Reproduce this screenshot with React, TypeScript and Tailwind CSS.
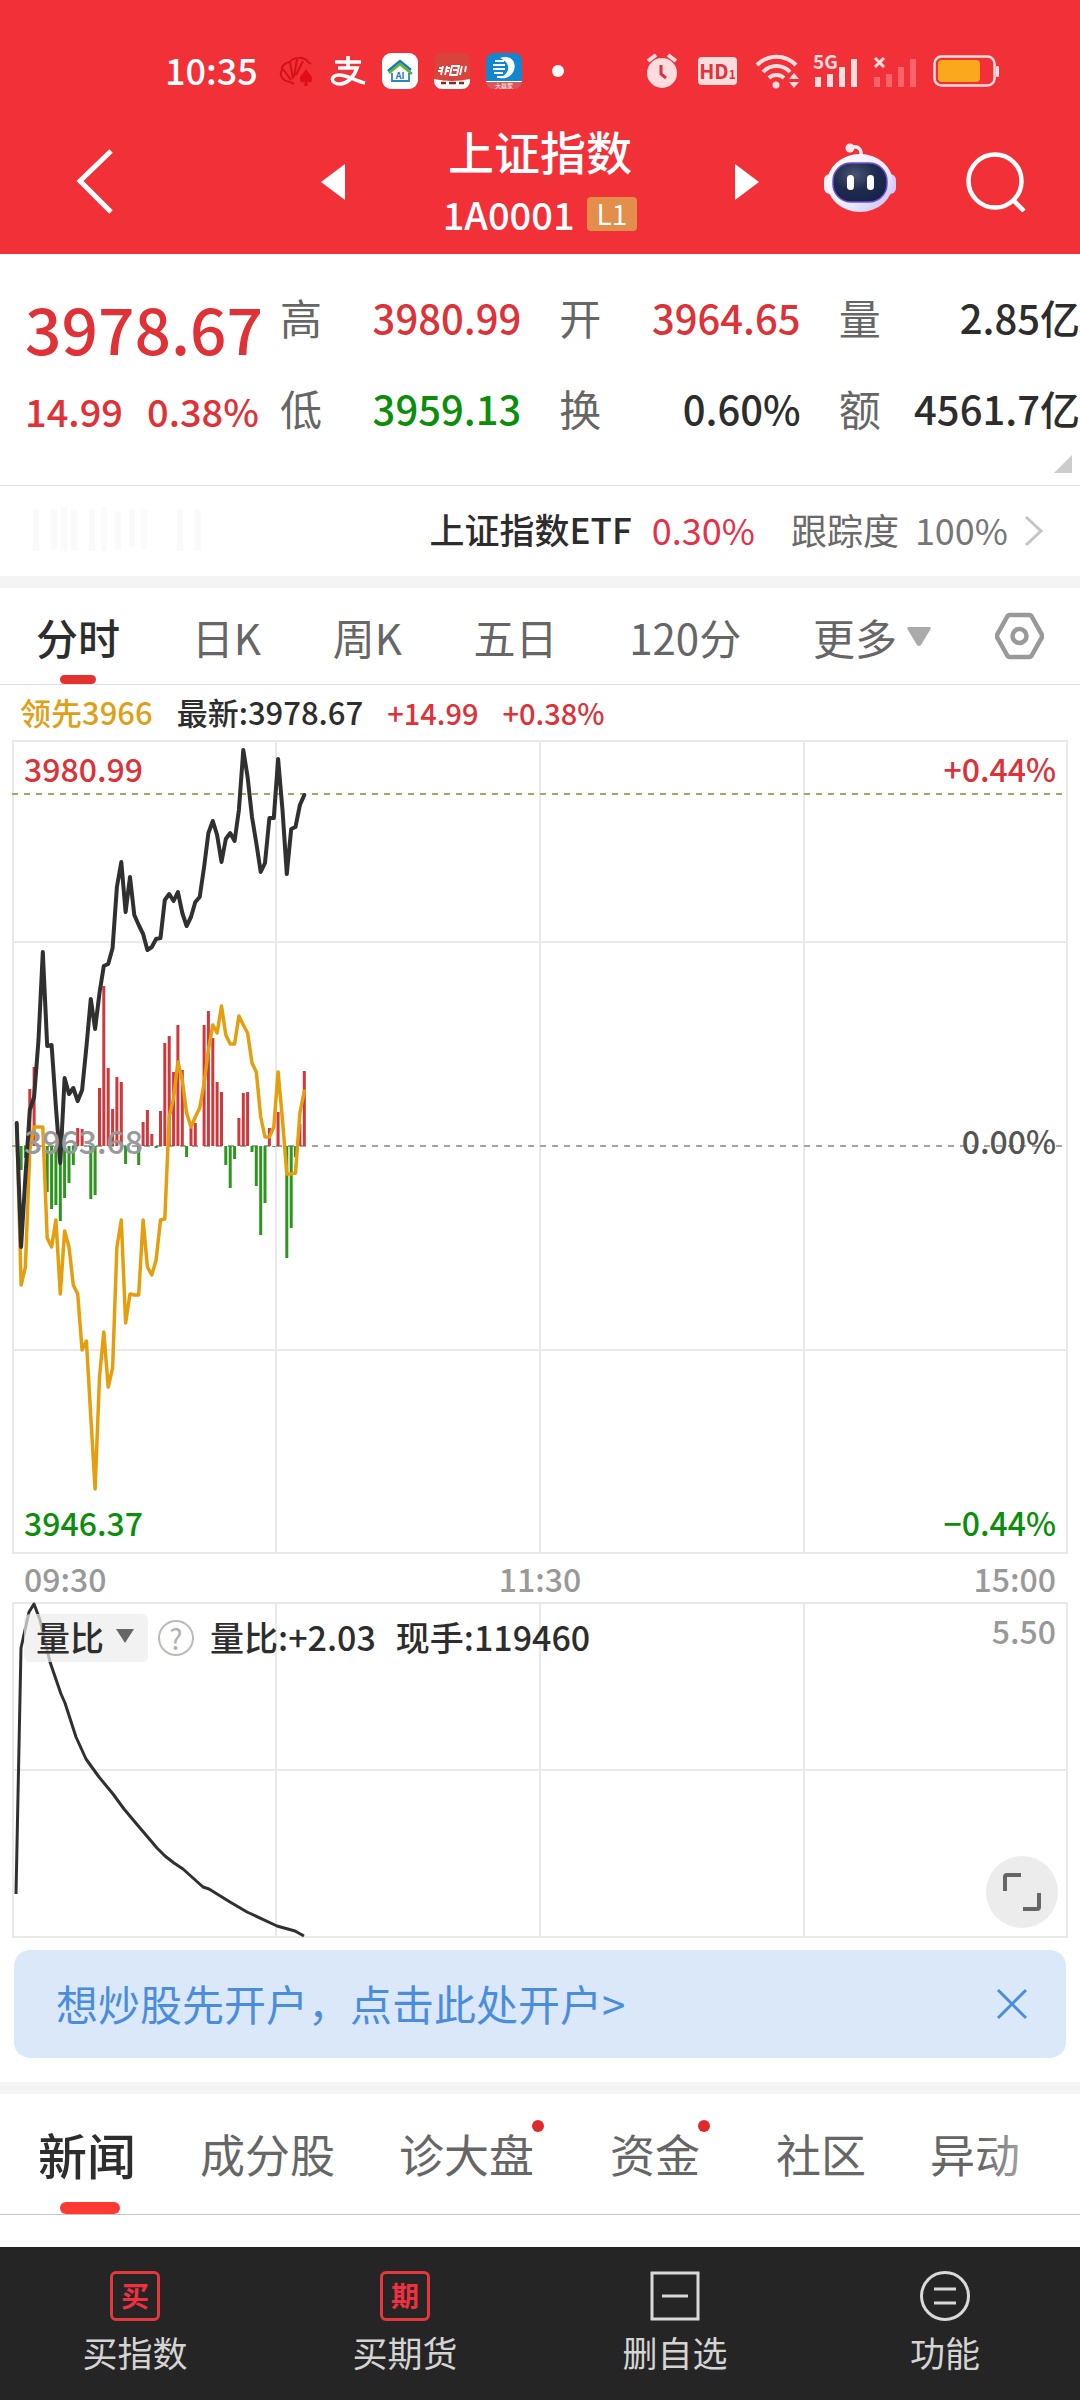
import React from "react";

const GRID = "#e9e9e9";

/* Minute series: values are y positions in the chart's own coordinate space */
const PRICE = [
  1123, 1247, 1177, 1110, 1097, 1040, 952, 1046, 1045, 1107, 1163, 1078, 1094, 1088, 1101, 1090, 1047,
  999, 1029, 993, 966, 964, 948, 887, 862, 912, 877, 915, 925, 934, 950, 947, 939, 938, 900, 894, 901,
  892, 913, 926, 917, 902, 897, 867, 833, 821, 835, 862, 839, 833, 841, 810, 750, 777, 817, 843, 872,
  863, 818, 818, 759, 810, 874, 829, 827, 805, 795,
];
const LEAD = [
  1123, 1285, 1267, 1150, 1127, 1127, 1127, 1238, 1247, 1220, 1294, 1231, 1247, 1285, 1294, 1350, 1341,
  1417, 1489, 1377, 1332, 1387, 1368, 1247, 1220, 1323, 1294, 1295, 1295, 1220, 1267, 1275, 1260, 1220,
  1219, 1117, 1098, 1062, 1080, 1113, 1127, 1117, 1108, 1083, 1050, 1025, 1033, 1006, 1035, 1044, 1044,
  1016, 1025, 1033, 1063, 1072, 1117, 1137, 1137, 1127, 1072, 1120, 1174, 1174, 1173, 1113, 1091,
];
/* Momentum bars: positive grows up (red), negative grows down (green) */
const BARS = [
  0, -24, -12, 57, 79, 0, 0, -46, -63, -59, -75, -52, -37, -19, 18, 17, 0, -53, -49, 58, 160, 78, 37, 69,
  64, -18, 0, 0, -19, 24, 36, 12, -2, 35, 103, 110, 74, 121, 76, -11, 18, 23, 0, 121, 135, 108, 64, 54,
  -19, -42, -13, 28, 53, 54, -6, -40, -89, -57, 18, -1, 34, 0, -112, -82, -11, 22, 75,
];
const RATIO =
  "16,1894 21,1648 29,1612 34,1604 40,1620 50,1662 61,1694 65,1703 76,1737 86,1759 99,1777 113,1794 124,1809 140,1828 157,1848 165,1856 174,1863 183,1869 203,1887 209,1889 230,1902 247,1912 277,1926 295,1931 304,1936";

const xAt = (i: number) => Math.round((16.7 + i * 4.357) * 10) / 10;
const toPoints = (s: number[]) => s.map((y, i) => `${xAt(i)},${y}`).join(" ");

function StatusBar() {
  return (
    <div className="flex h-[110px] items-center justify-between pl-[165px] pr-20 pt-8">
      <div className="flex items-center gap-4">
        <time className="mr-1 pb-1 text-[36px] font-medium leading-none">10:35</time>
        <svg className="h-8 w-9" viewBox="0 0 36 32" fill="none" stroke="#d70f18" strokeWidth="2">
          <path d="M12 27C4 26 1 20 4 15c-1-4 4-8 8-8 3-5 14-6 18 0l3 2M13 25 5 14M15 24l-3-17M16 22l3-18M18 20l7-14M12 27l4 2" />
          <path d="M28 14c-2 4-7 7-6 11 1 3 4 3 5 1l-1 5h4l-1-5c1 2 5 2 5-1 1-4-4-7-6-11Z" fill="#e00d14" stroke="none" />
        </svg>
        <svg className="h-8 w-9" viewBox="0 0 36 32" fill="none" stroke="#fff" strokeWidth="3.6">
          <path d="M5 7h26M18 1v12M8 13h19c-3 9-10 16-17 16-10 0-10-9-1-9 9 0 16 6 26 8" />
        </svg>
        <svg className="h-9 w-9" viewBox="0 0 36 36">
          <rect width="36" height="36" rx="9" fill="#fff" />
          <path d="m6 18 12-10 11 9" fill="none" stroke="#1e73b8" strokeWidth="2.5" />
          <path d="m7 20 11-9 12 10" fill="none" stroke="#5cb531" strokeWidth="2.5" />
          <path d="M10 20v8h17v-8" fill="none" stroke="#2b86c0" strokeWidth="1.8" />
          <text x="18" y="26" fontSize="9" fontWeight="700" textAnchor="middle" fill="#1e73b8">AI</text>
        </svg>
        <svg className="h-9 w-9" viewBox="0 0 36 36">
          <defs>
            <clipPath id="round"><rect width="36" height="36" rx="8" /></clipPath>
          </defs>
          <g clipPath="url(#round)">
            <rect width="36" height="36" fill="#d8443c" />
            <path d="M0 26q18 4 36 0v10H0Z" fill="#fff" />
            <path d="M9 13 7 22M13 13l-2 9M5 15h4M4 18h4M12 15h4M12 18h3M18 13h7l-2 9h-7ZM19 17h4M28 13l-2 9M32 13l-1 6" fill="none" stroke="#fff" strokeWidth="1.8" />
            <path d="M7 30h5M15 30h7M25 30h5" stroke="#7e2b28" strokeWidth="2.5" />
          </g>
        </svg>
        <svg className="h-9 w-9 overflow-visible" viewBox="0 0 36 36">
          <g clipPath="url(#round)">
            <rect width="36" height="36" fill="#1187cf" />
            <path d="M0 28h36v8H0Z" fill="#d9575c" />
            <path d="M0 28.500h36" stroke="#fff" strokeWidth="1" />
            <path d="M14 5c10-4 17 4 14 12-2 6-8 9-14 8 6-3 9-7 8-12-1-4-4-6-8-8Z" fill="#fff" />
            <path d="M9 8h9M7 12h12M7 16h12M8 20h9M11 24h9" stroke="#fff" strokeWidth="2" />
          </g>
          <text x="18" y="35" fontSize="6" textAnchor="middle" fill="#fff">大赢家</text>
        </svg>
        <span className="ml-3.5 size-3 rounded-full bg-white" />
      </div>
      <div className="flex items-center gap-4">
        <svg className="h-9 w-8" viewBox="0 0 32 36">
          <circle cx="16" cy="20" r="15" fill="#ffdcdd" />
          <path d="m2 8 8-6M30 8l-8-6" stroke="#ffdcdd" strokeWidth="4" />
          <path d="M15 12v9l5 4" fill="none" stroke="#d8343b" strokeWidth="3" />
        </svg>
        <span className="ml-1 flex h-7 w-[39px] items-baseline justify-center rounded-sm bg-[#ffdcdd] text-[20px] font-bold leading-7 text-[#e0323a]">
          HD<span className="text-[12px]">1</span>
        </span>
        <svg className="ml-0.5 h-9 w-[46px]" viewBox="0 0 46 36" fill="none" stroke="#ffdcdd" strokeWidth="4">
          <path d="M2 12a27 27 0 0 1 39 0M8 19a18 18 0 0 1 27 0M14 25a11 11 0 0 1 15 0" />
          <circle cx="21" cy="32" r="3.5" fill="#ffdcdd" stroke="none" />
          <path d="m34 26 5-6 5 6ZM34 29l5 6 5-6Z" fill="#ffdcdd" stroke="none" />
        </svg>
        <svg className="-ml-1.5 h-9 w-[46px] overflow-visible" viewBox="0 0 46 36">
          <text x="2" y="16" fontSize="19" fontWeight="700" fill="#ffdcdd">5G</text>
          <path d="M7 34V24M19 34V21M31 34V14M43 34V6" stroke="#ffdcdd" strokeWidth="6" />
        </svg>
        <svg className="h-9 w-11" viewBox="0 0 44 36">
          <path d="m2 5 9 9M11 5l-9 9" stroke="#ffdcdd" strokeWidth="3" />
          <path d="M4 34V24M16 34V21M28 34V14M40 34V6" stroke="#f7646b" strokeWidth="6" />
        </svg>
        <svg className="h-9 w-[67px]" viewBox="0 0 67 36">
          <rect x="1.5" y="3.5" width="60" height="29" rx="7" fill="none" stroke="#ffdcdd" strokeWidth="2.5" />
          <rect x="5" y="7" width="42" height="22" rx="4" fill="#fca81c" />
          <rect x="63" y="13" width="3" height="11" rx="1" fill="#ffdcdd" />
        </svg>
      </div>
    </div>
  );
}

function Robot() {
  return (
    <svg className="h-[70px] w-[74px]" viewBox="0 0 74 70">
      <defs>
        <linearGradient id="shell" x1="0" y1="0" x2="1" y2="1">
          <stop offset="0" stopColor="#fff" />
          <stop offset="0.6" stopColor="#eeeafc" />
          <stop offset="1" stopColor="#c3b9f5" />
        </linearGradient>
        <radialGradient id="visor" cx="0.4" cy="0.3" r="0.8">
          <stop offset="0" stopColor="#4a5574" />
          <stop offset="0.5" stopColor="#1f2b4d" />
          <stop offset="1" stopColor="#16204a" />
        </radialGradient>
      </defs>
      <path d="M26 5c8-3 13 0 12 8" fill="none" stroke="#fdeef2" strokeWidth="3.5" />
      <circle cx="27" cy="5" r="4.5" fill="#fde8ee" />
      <rect x="1" y="31" width="12" height="20" rx="6" fill="#f2f0fd" />
      <rect x="61" y="31" width="12" height="20" rx="6" fill="#d4cdf8" />
      <ellipse cx="37" cy="40" rx="33" ry="29" fill="url(#shell)" />
      <rect x="10" y="20" width="54" height="39" rx="18" fill="url(#visor)" stroke="#6c4fd0" strokeWidth="1.5" />
      <rect x="24" y="32" width="7" height="15" rx="3.5" fill="#fff" />
      <rect x="44" y="32" width="7" height="15" rx="3.5" fill="#fff" />
    </svg>
  );
}

function Header() {
  return (
    <header className="bg-[#f23038] text-white">
      <StatusBar />
      <div className="grid h-[144px] grid-cols-[1fr_438px_1fr] items-center">
        <div className="pl-[74px]">
          <button aria-label="返回" className="block">
            <svg className="h-[66px] w-10" viewBox="0 0 40 66" fill="none" stroke="#fff" strokeWidth="5">
              <path d="M37 2 6 32l31 31" />
            </svg>
          </button>
        </div>
        <div className="flex items-center justify-between">
          <button aria-label="上一个">
            <svg className="h-9 w-6" viewBox="0 0 24 36"><path d="M24 0v36L0 18Z" fill="#fff" /></svg>
          </button>
          <div className="text-center">
            <h1 className="text-[46px] font-medium leading-[64px]">上证指数</h1>
            <div className="flex items-center justify-center gap-3 text-[38px] font-medium leading-[64px]">
              1A0001
              <span className="h-[34px] rounded-sm bg-[#e38e4a] px-2.5 text-[28px] font-normal leading-[32px]">L1</span>
            </div>
          </div>
          <button aria-label="下一个">
            <svg className="h-9 w-6" viewBox="0 0 24 36"><path d="M0 0v36l24-18Z" fill="#fff" /></svg>
          </button>
        </div>
        <div className="flex items-center justify-between pl-16 pr-[54px]">
          <button aria-label="智能助手" className="pb-2"><Robot /></button>
          <button aria-label="搜索">
            <svg className="size-[60px]" viewBox="0 0 60 60" fill="none" stroke="#fff" strokeWidth="4.5">
              <circle cx="29" cy="29" r="26.5" />
              <path d="m47 48 11 11" />
            </svg>
          </button>
        </div>
      </div>
    </header>
  );
}

const QUOTES = [
  { label: "高", value: "3980.99", tone: "text-[#dc3238]" },
  { label: "开", value: "3964.65", tone: "text-[#dc3238]" },
  { label: "量", value: "2.85亿", tone: "text-[#2d2d2d]" },
  { label: "低", value: "3959.13", tone: "text-[#0b8f0b]" },
  { label: "换", value: "0.60%", tone: "text-[#2d2d2d]" },
  { label: "额", value: "4561.7亿", tone: "text-[#2d2d2d]" },
];

function QuoteSummary() {
  return (
    <section className="relative flex border-b border-[#e2e2e2] pb-8 pt-[17px]">
      <div className="w-[280px] shrink-0 whitespace-nowrap pl-[25px] font-medium text-[#e03136]">
        <div className="text-[64px] leading-[112px]">3978.67</div>
        <div className="flex gap-6 pt-1 text-[38px] leading-[48px]">
          <span>14.99</span>
          <span>0.38%</span>
        </div>
      </div>
      <dl className="grid flex-1 grid-cols-3 gap-x-[38px]">
        {QUOTES.map((q) => (
          <div key={q.label} className="flex h-[91px] items-center justify-between whitespace-nowrap">
            <dt className="text-[42px] text-[#666]">{q.label}</dt>
            <dd className={`text-[40px] font-medium ${q.tone}`}>{q.value}</dd>
          </div>
        ))}
      </dl>
      <svg className="absolute bottom-3 right-2 size-[18px]" viewBox="0 0 18 18"><path d="M18 0v18H0Z" fill="#ccc" /></svg>
    </section>
  );
}

function EtfRow() {
  return (
    <a href="#etf" className="flex h-[90px] items-center justify-end whitespace-nowrap pb-1 pr-9 text-[36px]">
      <svg className="mr-auto ml-6 h-12 w-[180px]" viewBox="0 0 180 48" fill="none" stroke="#fafafa" strokeWidth="6">
        <path d="M12 4v42M30 4v40M40 2v44M50 4v42M68 4v42M80 2v44M94 6v38M108 4v38M120 4v40M156 4v42M174 4v42" />
      </svg>
      <span className="text-[35px] font-medium text-[#2d2d2d]">上证指数ETF</span>
      <span className="ml-5 text-[#e6304a]">0.30%</span>
      <span className="ml-9 text-[#6a6a6a]">跟踪度</span>
      <span className="ml-4 text-[#777]">100%</span>
      <svg className="ml-4 mt-1 h-8 w-5" viewBox="0 0 20 32" fill="none" stroke="#c4c4c4" strokeWidth="3"><path d="m2 2 15 14L2 30" /></svg>
    </a>
  );
}

function PeriodTabs() {
  const rest = ["日K", "周K", "五日", "120分"];
  return (
    <nav className="flex h-[97px] items-center border-b border-[#dedede] pl-9 text-[42px] text-[#666]">
      <div className="flex h-full flex-1 items-center justify-between">
        <button className="relative h-full font-medium text-[#2d2d2d]">
          分时
          <span className="absolute bottom-0 left-1/2 h-[9px] w-9 -translate-x-1/2 rounded-full bg-[#e5322f]" />
        </button>
        {rest.map((t) => (
          <button key={t}>{t}</button>
        ))}
        <button className="flex items-center gap-2.5">
          更多
          <svg className="h-[19px] w-6" viewBox="0 0 24 19"><path d="M2 0h20q3 0 1 3L14 18q-2 2-4 0L1 3Q-1 0 2 0Z" fill="#aaa" /></svg>
        </button>
      </div>
      <button aria-label="设置" className="ml-16 mr-9">
        <svg className="h-12 w-[49px]" viewBox="0 0 49 48" fill="none" stroke="#999" strokeWidth="4.5">
          <path d="M15 3h19q2 0 3 2l9 16q2 3 0 6l-9 16q-1 2-3 2H15q-2 0-3-2L3 27q-2-3 0-6l9-16q1-2 3-2Z" />
          <circle cx="24.500" cy="24" r="7" />
        </svg>
      </button>
    </nav>
  );
}

function PriceChart() {
  return (
    <div className="relative mx-3 text-[32px] font-medium leading-9">
      <svg className="block h-[814px] w-full" viewBox="12 740 1056 814" preserveAspectRatio="none">
        <path
          d="M276 740v814M540 740v814M804 740v814M12 942h1056M12 1350h1056M13 741h1054v812H13Z"
          fill="none"
          stroke={GRID}
          strokeWidth="2"
        />
        <path d="M12 1146h1056" stroke="#a3a3a3" strokeWidth="2" strokeDasharray="6 6" />
        <path d="M12 794h1056" stroke="#aaa263" strokeWidth="2" strokeDasharray="6 6" />
        {BARS.map((b, i) => (
          <rect
            key={i}
            x={xAt(i) - 1.5}
            width="3"
            y={b > 0 ? 1146 - b : 1146}
            height={Math.abs(b)}
            fill={b > 0 ? "#d0383c" : "#2f9420"}
          />
        ))}
        <polyline points={toPoints(LEAD)} fill="none" stroke="#e59f0e" strokeWidth="3.5" strokeLinejoin="round" strokeLinecap="round" />
        <polyline points={toPoints(PRICE)} fill="none" stroke="#303030" strokeWidth="4" strokeLinejoin="round" strokeLinecap="round" />
      </svg>
      <span className="absolute left-3 top-2.5 text-[#dc3238]">3980.99</span>
      <span className="absolute right-3 top-2.5 text-[#dc3238]">+0.44%</span>
      <span className="absolute left-3 top-[382px] text-[#999]">3963.68</span>
      <span className="absolute right-3 top-[382px] text-[#555]">0.00%</span>
      <span className="absolute bottom-3.5 left-3 text-[#0b8f0b]">3946.37</span>
      <span className="absolute bottom-3.5 right-3 text-[#0b8f0b]">−0.44%</span>
    </div>
  );
}

function RatioChart() {
  return (
    <div className="relative mx-3 text-[34px] font-medium">
      <svg className="block h-[336px] w-full" viewBox="12 1602 1056 336" preserveAspectRatio="none">
        <path
          d="M276 1602v336M540 1602v336M804 1602v336M12 1770h1056M13 1603h1054v334H13Z"
          fill="none"
          stroke={GRID}
          strokeWidth="2"
        />
        <polyline points={RATIO} fill="none" stroke="#303030" strokeWidth="3" strokeLinejoin="round" />
      </svg>
      <div className="absolute left-3 top-3 flex h-12 items-center whitespace-nowrap text-[#2d2d2d]">
        <button className="flex h-12 items-center gap-3 rounded-md bg-[#ededed]/70 pb-1 pl-3 pr-3.5">
          量比
          <svg className="h-[14px] w-[18px]" viewBox="0 0 18 14"><path d="M0 0h18L9 14Z" fill="#666" /></svg>
        </button>
        <button aria-label="说明" className="ml-2.5 size-9 rounded-full border-2 border-[#bbb] text-[28px] font-normal leading-[30px] text-[#b0b0b0]">
          ?
        </button>
        <span className="ml-4 pb-1">量比:+2.03</span>
        <span className="ml-5 pb-1">现手:119460</span>
      </div>
      <span className="absolute right-3 top-2.5 text-[32px] leading-9 text-[#999]">5.50</span>
      <button aria-label="全屏" className="absolute bottom-2.5 right-2.5 flex size-[72px] items-center justify-center rounded-full bg-[#ececec]">
        <svg className="size-[38px]" viewBox="0 0 38 38" fill="none" stroke="#666" strokeWidth="4">
          <path d="M2 18V4q0-2 2-2h14M36 20v14q0 2-2 2H20" />
        </svg>
      </button>
    </div>
  );
}

function NewsTabs() {
  const tabs = [
    { name: "成分股", dot: false },
    { name: "诊大盘", dot: true },
    { name: "资金", dot: true },
    { name: "社区", dot: false },
    { name: "异动", dot: false },
  ];
  return (
    <nav className="relative flex h-[121px] items-center gap-16 overflow-hidden whitespace-nowrap border-b border-[#c4c4c4] pl-[38px] text-[45px] text-[#666]">
      <button className="relative h-full text-[49px] font-medium text-[#2d2d2d]">
        新闻
        <span className="absolute bottom-0 left-[22px] h-3 w-[60px] rounded-full bg-[#fc3a33]" />
      </button>
      {tabs.map((t) => (
        <button key={t.name} className={t.dot ? "relative pr-3" : "relative"}>
          {t.name}
          {t.dot && <span className="absolute right-0.5 top-0 size-3 rounded-full bg-[#e02a2a]" />}
        </button>
      ))}
      <span className="absolute inset-y-0 right-0 w-[100px] bg-linear-to-r from-white/0 to-white" />
    </nav>
  );
}

function BottomBar() {
  const boxed = "flex size-[50px] items-center justify-center rounded-md border-3 border-[#e2383e] pb-0.5 text-[28px] font-bold leading-none text-[#ee3040]";
  const items = [
    { label: "买指数", icon: <span className={boxed}>买</span> },
    { label: "买期货", icon: <span className={boxed}>期</span> },
    {
      label: "删自选",
      icon: (
        <svg className="size-[50px]" viewBox="0 0 50 50" fill="none" stroke="#d9d9d9" strokeWidth="3">
          <path d="M2 2h46v46H2ZM12 25h26" />
        </svg>
      ),
    },
    {
      label: "功能",
      icon: (
        <svg className="size-[50px]" viewBox="0 0 50 50" fill="none" stroke="#d9d9d9" strokeWidth="3">
          <circle cx="25" cy="25" r="23.500" />
          <path d="M14 18h22M14 32h22" />
        </svg>
      ),
    },
  ];
  return (
    <footer className="grid grid-cols-4 bg-[#252525] pb-[22px] pt-6 text-[35px] text-[#d4d4d4]">
      {items.map((it) => (
        <button key={it.label} className="flex flex-col items-center gap-1">
          {it.icon}
          <span className="leading-[53px]">{it.label}</span>
        </button>
      ))}
    </footer>
  );
}

export default function App() {
  return (
    <main className="w-full bg-white font-['Noto_Sans_CJK_SC','Noto_Sans',sans-serif]">
      <Header />
      <QuoteSummary />
      <EtfRow />
      <div className="h-3 bg-[#f4f4f4]" />
      <PeriodTabs />
      <div className="flex h-[55px] items-center gap-6 whitespace-nowrap pl-5 text-[31px] font-medium">
        <span className="text-[#e0a016]">领先3966</span>
        <span className="text-[#2d2d2d]">最新:3978.67</span>
        <span className="text-[29px] text-[#dc3238]">+14.99</span>
        <span className="text-[29px] text-[#dc3238]">+0.38%</span>
      </div>
      <PriceChart />
      <div className="grid h-12 grid-cols-3 items-center px-6 pb-1 text-[32px] font-medium text-[#999]">
        <span>09:30</span>
        <span className="text-center">11:30</span>
        <span className="text-right">15:00</span>
      </div>
      <RatioChart />
      <div className="mx-3.5 mb-6 mt-3 flex h-[108px] items-center justify-between rounded-2xl bg-[#dbe8fa] pl-[42px] pr-[38px] text-[42px] text-[#4a8ddc]">
        <a href="#open" className="pb-1">想炒股先开户，点击此处开户&gt;</a>
        <button aria-label="关闭">
          <svg className="size-8" viewBox="0 0 32 32" fill="none" stroke="#4a8ddc" strokeWidth="3"><path d="m2 2 28 28M30 2 2 30" /></svg>
        </button>
      </div>
      <div className="h-3 bg-[#f4f4f4]" />
      <NewsTabs />
      <div className="h-8" />
      <BottomBar />
    </main>
  );
}
